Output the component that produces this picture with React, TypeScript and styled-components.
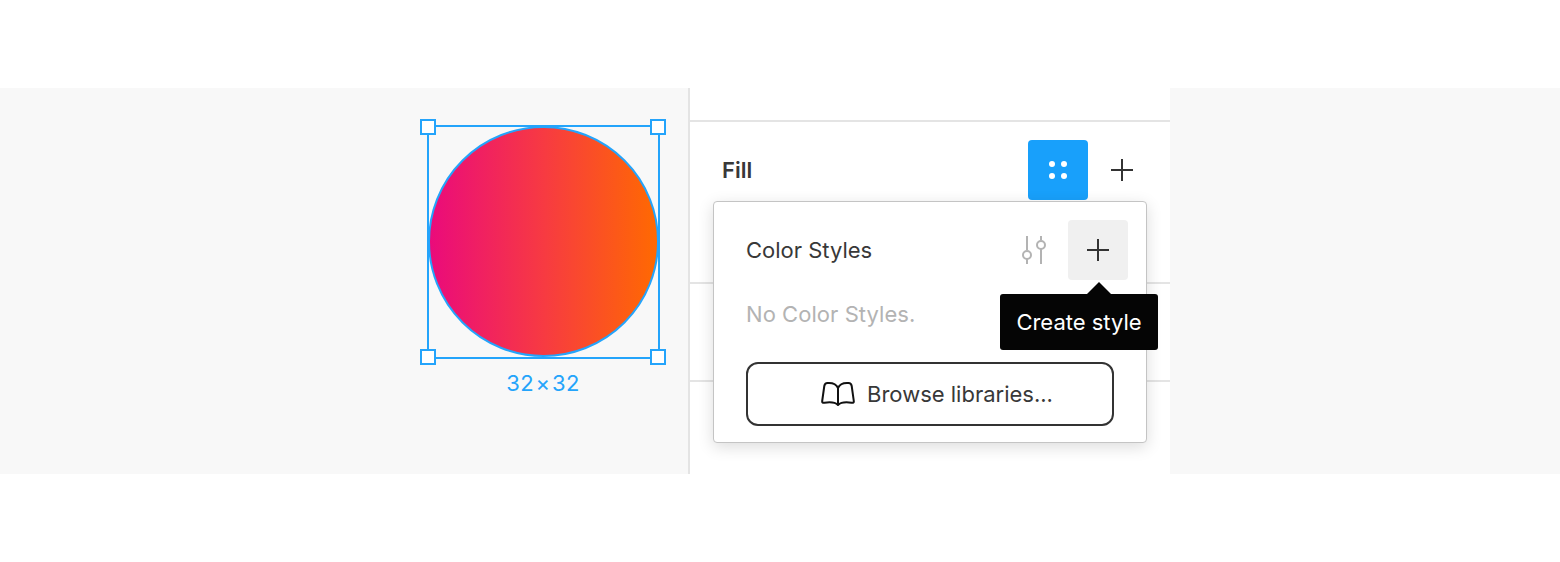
import styled, { createGlobalStyle } from "styled-components";

const GlobalStyle = createGlobalStyle`
  html, body {
    margin: 0;
    padding: 0;
    background: #fff;
    font-family: Inter, "Liberation Sans", sans-serif;
  }
`;

const Page = styled.div`
  width: 1560px;
  height: 562px;
  padding-top: 88px;
  box-sizing: border-box;
  overflow: hidden;
`;

const Stage = styled.div`
  display: flex;
  height: 386px;
  background: #f8f8f8;
`;

const Canvas = styled.div`
  position: relative;
  width: 688px;
  flex: none;
`;

const Frame = styled.div`
  position: absolute;
  left: 427px;
  top: 37px;
  width: 233px;
  height: 234px;
  box-sizing: border-box;
  border: 2px solid #24a4fb;
`;

const Circle = styled.div`
  width: 231px;
  height: 231px;
  margin: -1px;
  box-sizing: border-box;
  border: 2px solid #24a4fb;
  border-radius: 50%;
  background: linear-gradient(90deg, #ea0a7c 0%, #f73a42 50%, #ff6a00 100%) border-box;
`;

const Handle = styled.span<{ $x: "left" | "right"; $y: "top" | "bottom" }>`
  position: absolute;
  ${(p) => p.$x}: ${(p) => (p.$x === "left" ? -9 : -8)}px;
  ${(p) => p.$y}: -8px;
  width: 16px;
  height: 16px;
  box-sizing: border-box;
  background: #fff;
  border: 2px solid #24a4fb;
`;

const SizeLabel = styled.div`
  position: absolute;
  left: 427px;
  top: 281px;
  width: 232px;
  text-align: center;
  font-size: 22px;
  line-height: 28px;
  letter-spacing: 0.4px;
  color: #24a4fb;
`;

const Times = styled.span`
  margin: 0 1.5px;
`;

const Panel = styled.div`
  position: relative;
  width: 480px;
  flex: none;
  box-sizing: content-box;
  background: #fff;
  border-left: 2px solid #e4e4e4;
`;

const Section = styled.div<{ $height: number }>`
  height: ${(p) => p.$height}px;
  box-sizing: border-box;
  border-bottom: 2px solid #e4e4e4;
`;

const FillHeader = styled.div`
  display: flex;
  align-items: center;
  padding: 18px 14px 0 32px;
`;

const FillTitle = styled.div`
  flex: 1;
  font-size: 22px;
  line-height: 26px;
  font-weight: 600;
  color: #383838;
`;

const IconButton = styled.div<{ $bg?: string; $width?: number }>`
  display: flex;
  align-items: center;
  justify-content: center;
  width: ${(p) => p.$width ?? 60}px;
  height: 60px;
  border-radius: 4px;
  background: ${(p) => p.$bg ?? "transparent"};
`;

const Popover = styled.div`
  position: absolute;
  left: 23px;
  top: 113px;
  width: 434px;
  height: 242px;
  box-sizing: border-box;
  padding: 18px 18px 0 32px;
  background: #fff;
  border: 1px solid #c4c4c4;
  border-radius: 4px;
  box-shadow: 0 4px 16px rgba(0, 0, 0, 0.14);
`;

const PopoverHeader = styled.div`
  display: flex;
  align-items: center;
  height: 60px;
`;

const PopoverTitle = styled.div`
  flex: 1;
  font-size: 22px;
  line-height: 28px;
  color: #383838;
`;

const EmptyText = styled.div`
  margin-top: 20px;
  font-size: 22px;
  line-height: 28px;
  letter-spacing: 0.05px;
  color: #b3b3b3;
`;

const BrowseButton = styled.div`
  display: flex;
  align-items: center;
  justify-content: center;
  gap: 12px;
  width: 368px;
  height: 64px;
  margin-top: 34px;
  padding-left: 14px;
  box-sizing: border-box;
  border: 2px solid #333;
  border-radius: 12px;
  font-size: 22px;
  color: #383838;
`;

const Tooltip = styled.div`
  position: absolute;
  left: 286px;
  top: 92px;
  width: 158px;
  height: 56px;
  display: flex;
  align-items: center;
  justify-content: center;
  border-radius: 3px;
  background: #050505;
  color: #fff;
  font-size: 22px;

  &::before {
    content: "";
    position: absolute;
    left: 87px;
    top: -12px;
    border-left: 12px solid transparent;
    border-right: 12px solid transparent;
    border-bottom: 12px solid #050505;
  }
`;

const RightGutter = styled.div`
  flex: 1;
`;

const Plus = () => (
  <svg width="22" height="22" viewBox="0 0 22 22" fill="none">
    <path d="M11 0V22M0 11H22" stroke="#333" strokeWidth="2" />
  </svg>
);

const Dots = () => (
  <svg width="18" height="18" viewBox="0 0 18 18" fill="#fff">
    <circle cx="3" cy="3" r="3" />
    <circle cx="15" cy="3" r="3" />
    <circle cx="3" cy="15" r="3" />
    <circle cx="15" cy="15" r="3" />
  </svg>
);

const Sliders = () => (
  <svg width="24" height="28" viewBox="0 0 24 28" fill="none" stroke="#b3b3b3" strokeWidth="2">
    <path d="M5 0V14M5 23V28M19 0V4M19 13V28" />
    <circle cx="5" cy="19" r="4" />
    <circle cx="19" cy="9" r="4" />
  </svg>
);

const Book = () => (
  <svg width="34" height="24" viewBox="0 0 34 24" fill="none" stroke="#111" strokeWidth="2" strokeLinejoin="round">
    <path d="M17 6C15.5 2.5 12 1 8 1H6.5C4.5 1 3.6 2 3.3 4L1.2 19C1 20.6 2 21 3.5 20.8C8.5 20 14 20.2 17 23C20 20.2 25.5 20 30.5 20.8C32 21 33 20.6 32.8 19L30.7 4C30.4 2 29.5 1 27.5 1H26C22 1 18.5 2.5 17 6ZM17 6V23" />
  </svg>
);

export default function App() {
  return (
    <Page>
      <GlobalStyle />
      <Stage>
        <Canvas>
          <Frame>
            <Circle />
            <Handle $x="left" $y="top" />
            <Handle $x="right" $y="top" />
            <Handle $x="left" $y="bottom" />
            <Handle $x="right" $y="bottom" />
          </Frame>
          <SizeLabel>
            32<Times>×</Times>32
          </SizeLabel>
        </Canvas>
        <Panel>
          <Section $height={34} />
          <Section $height={162}>
            <FillHeader>
              <FillTitle>Fill</FillTitle>
              <IconButton $bg="#18a0fb">
                <Dots />
              </IconButton>
              <IconButton $width={68}>
                <Plus />
              </IconButton>
            </FillHeader>
          </Section>
          <Section $height={98} />
          <Popover>
            <PopoverHeader>
              <PopoverTitle>Color Styles</PopoverTitle>
              <IconButton $width={68}>
                <Sliders />
              </IconButton>
              <IconButton $bg="#f0f0f0">
                <Plus />
              </IconButton>
            </PopoverHeader>
            <EmptyText>No Color Styles.</EmptyText>
            <BrowseButton>
              <Book />
              Browse libraries...
            </BrowseButton>
            <Tooltip>Create style</Tooltip>
          </Popover>
        </Panel>
        <RightGutter />
      </Stage>
    </Page>
  );
}
